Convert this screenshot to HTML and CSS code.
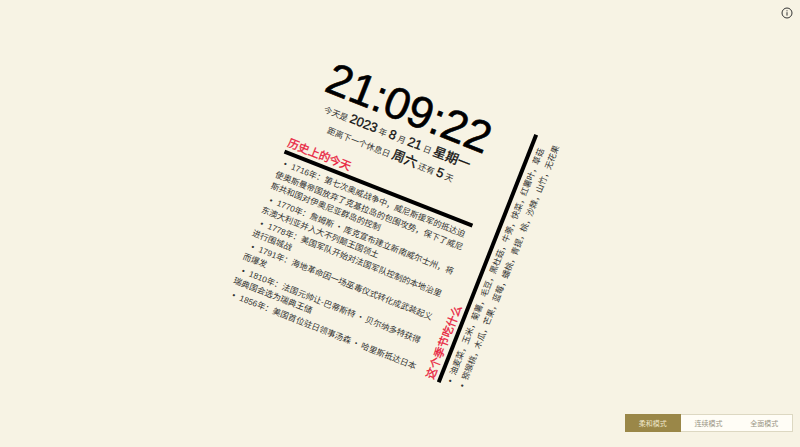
FILE: index.html
```html
<!DOCTYPE html>
<html lang="zh">
<head>
<meta charset="utf-8">
<title>日历</title>
<link rel="stylesheet" href="styles.css">
</head>
<body>
<button class="info" aria-label="info">
<svg viewBox="0 0 12 12" width="12" height="12"><circle cx="6" cy="6" r="5" fill="none" stroke="#333" stroke-width="1"/><rect x="5.5" y="5.2" width="1" height="3.4" fill="#333"/><rect x="5.5" y="3.3" width="1" height="1" fill="#333"/></svg>
</button>
<main class="poster">
  <section class="main-col">
    <div class="clock">21:09:22</div>
    <p class="date">今天是 <b>2023</b> 年 <b>8</b> 月 <b>21</b> 日 <b>星期一</b></p>
    <p class="date">距离下一个休息日 <b>周六</b> 还有 <b>5</b> 天</p>
    <h2 class="title">历史上的今天</h2>
    <ul class="list">
      <li>1716年：第七次奥威战争中，威尼斯援军的抵达迫使奥斯曼帝国放弃了克基拉岛的包围攻势，保下了威尼斯共和国对伊奥尼亚群岛的控制</li>
      <li>1770年：詹姆斯<span class="zh">·</span>库克宣布建立新南威尔士州，将东澳大利亚并入大不列颠王国领土</li>
      <li>1778年：美国军队开始对法国军队控制的本地治里进行围城战</li>
      <li>1791年：海地革命因一场巫毒仪式转化成武装起义而爆发</li>
      <li>1810年：法国元帅让-巴蒂斯特<span class="zh">·</span>贝尔纳多特获得瑞典国会选为瑞典王储</li>
      <li>1856年：美国首位驻日领事汤森<span class="zh">·</span>哈里斯抵达日本</li>
    </ul>
  </section>
  <section class="side-col">
    <h2 class="title side-title">这个季节吃什么</h2>
    <ul class="list side-list">
      <li>油麦菜，玉米，菊薯，毛豆，黑杜菇，牛蒡，快菜，红薯叶，草菇</li>
      <li>猕猴桃，木瓜，芒果，蓝莓，蟠桃，青提，桃，沙棘，山竹，无花果</li>
    </ul>
  </section>
</main>
<nav class="modes">
  <span class="mode active">柔和模式</span>
  <span class="mode">连续模式</span>
  <span class="mode">全面模式</span>
</nav>
</body>
</html>
```
FILE: styles.css
```css
* { box-sizing: border-box; }
html, body { height: 100%; }
body {
  margin: 0;
  background: #f7f3e4;
  color: #111;
  font-family: "Liberation Sans", "Noto Sans CJK SC", sans-serif;
  display: flex;
  align-items: center;
  justify-content: center;
  overflow: hidden;
}
.poster {
  width: 268px;
  height: 266px;
  display: flex;
  gap: 8px;
  transform: rotate(21.5deg);
}
.main-col { width: 202px; flex: none; }
.clock { font-size: 44.5px; line-height: 44px; text-align: center; white-space: nowrap; -webkit-text-stroke: .6px #000; color: #000; padding-right: 2px; }
.date { margin: 2px 0 0; font-size: 8.4px; line-height: 14px; text-align: center; white-space: nowrap; color: #333; padding-right: 3px; }
.date + .date { margin-top: 3px; }
.title { margin: 11px 0 0; font-size: 11.2px; line-height: 16px; color: #e8203c; font-weight: 400; -webkit-text-stroke: .3px #e8203c; }
.date b { font-size: 13px; font-weight: 400; color: #111; -webkit-text-stroke: .3px #111; }
.list { list-style: none; margin: 0; padding: 3px 0 0; font-size: 8.4px; line-height: 12.5px; color: #333; border-top: 4px solid #000; }
.list li::before { content: "•"; display: inline-block; inline-size: 8px; margin-inline-start: 4px; }
.zh { font-family: "Noto Sans CJK SC", sans-serif; padding: 0 1.5px; }
.side-col {
  writing-mode: vertical-rl;
  text-orientation: sideways;
  transform: rotate(180deg);
  display: flex;
  flex-direction: column;
  flex: 1;
}
.side-title { margin: 0; white-space: nowrap; }
.side-list { border-top: 0; border-right: 4px solid #000; padding: 0 2px 0 0; line-height: 13px; white-space: nowrap; }
.info { position: absolute; top: 7px; right: 7px; border: 0; padding: 0; background: none; width: 12px; height: 12px; line-height: 0; }
.modes { position: absolute; right: 7px; bottom: 15px; display: flex; width: 168px; height: 18px; background: #fffdf6; border: 1px solid #ddd8c2; font-size: 7px; color: #9a9584; }
.mode { flex: 1; display: flex; align-items: center; justify-content: center; }
.active { background: #9a8748; color: #eee6c8; margin: -1px 0 -1px -1px; }
```
